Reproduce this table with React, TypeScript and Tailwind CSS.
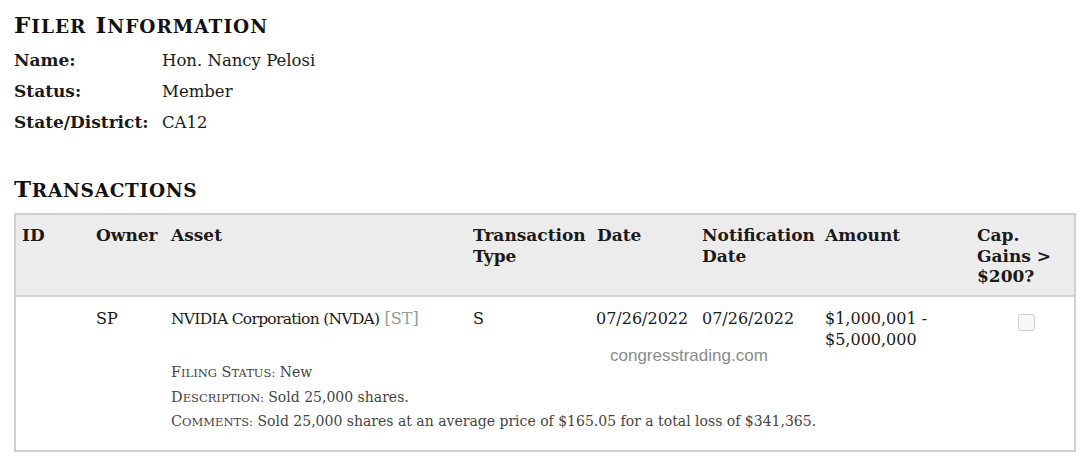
import React from "react";

const serif = { fontFamily: '"DejaVu Serif", "Liberation Serif", serif' };

function SC({ text, big, small, className = "" }: { text: string; big: string; small: string; className?: string }) {
  const words = text.split(" ");
  return (
    <span className={className}>
      {words.map((w, i) => (
        <React.Fragment key={i}>
          {i > 0 ? " " : ""}
          <span className={`${big} leading-none`}>{w[0]}</span>
          <span className={`${small} leading-none uppercase`}>{w.slice(1)}</span>
        </React.Fragment>
      ))}
    </span>
  );
}

export default function App() {
  const cols = "grid grid-cols-[74px_75px_302px_124px_105px_123px_152px_105px]";
  return (
    <div className="w-[1089px] h-[469px] bg-white text-[#1a1a1a] relative overflow-hidden" style={serif}>
      <div className="pl-[14px] pt-[11px]">
        <h2 className="font-bold tracking-[1px] text-[23px] leading-[28px] h-[28px] text-[#111]">
          <SC text="Filer Information" big="text-[23px]" small="text-[18.5px]" />
        </h2>
        <div className="mt-[6px] text-[17px] leading-[31px]">
          <div className="flex">
            <span className="w-[148px] font-bold">Name:</span>
            <span className="text-[16.5px]">Hon. Nancy Pelosi</span>
          </div>
          <div className="flex">
            <span className="w-[148px] font-bold">Status:</span>
            <span className="text-[16.5px]">Member</span>
          </div>
          <div className="flex">
            <span className="w-[148px] font-bold">State/District:</span>
            <span className="text-[16.5px]">CA12</span>
          </div>
        </div>
        <h2 className="mt-[37px] font-bold tracking-[0.7px] text-[23px] leading-[28px] h-[28px] text-[#111]">
          <SC text="Transactions" big="text-[23px]" small="text-[18.5px]" />
        </h2>
      </div>

      <div className="ml-[14px] mt-[10px] w-[1062px] border-2 border-[#d0d0d0] relative">
        <div className={`${cols} bg-[#ececec] border-b-2 border-[#d4d4d4] h-[82px] text-[17px] font-bold leading-[20.5px] pt-[10px]`}>
          <div className="pl-[6px]">ID</div>
          <div className="pl-[6px]">Owner</div>
          <div className="pl-[6px]">Asset</div>
          <div className="pl-[6px]">Transaction<br />Type</div>
          <div className="pl-[6px]">Date</div>
          <div className="pl-[6px]">Notification<br />Date</div>
          <div className="pl-[6px]">Amount</div>
          <div className="pl-[6px]">Cap.<br />Gains &gt;<br />$200?</div>
        </div>
        <div className={`${cols} text-[16px] leading-[21px] pt-[11px] pb-[16px]`}>
          <div className="pl-[6px]"></div>
          <div className="pl-[6px]">SP</div>
          <div className="pl-[6px]">
            <span className="text-[15.5px] tracking-[-0.7px]">NVIDIA Corporation (NVDA)</span>{" "}
            <span className="text-[#999]">[ST]</span>
          </div>
          <div className="pl-[6px]">S</div>
          <div className="pl-[5px]">07/26/2022</div>
          <div className="pl-[6px]">07/26/2022</div>
          <div className="pl-[6px]">$1,000,001 -<br />$5,000,000</div>
          <div className="flex justify-center pt-[6px] pl-[6px]">
            <div className="w-[17px] h-[17px] rounded-[3px] border border-[#cfcfcf] bg-[#f7f7f7]" />
          </div>
          <div className="col-start-3 col-span-6 pl-[6px] mt-[10px] text-[14px] leading-[24.5px] text-[#444]">
            <div>
              <SC text="Filing Status:" big="text-[14.5px]" small="text-[11.5px]" /> New
            </div>
            <div>
              <SC text="Description:" big="text-[14.5px]" small="text-[11.5px]" /> Sold 25,000 shares.
            </div>
            <div>
              <SC text="Comments:" big="text-[14.5px]" small="text-[11.5px]" /> Sold 25,000 shares at an average price of $165.05 for a total loss of $341,365.
            </div>
          </div>
        </div>
      </div>

      <div
        className="absolute left-[610px] top-[345px] text-[17px] text-[#8a8a8a] leading-[22px]"
        style={{ fontFamily: '"Liberation Sans", Arial, sans-serif' }}
      >
        congresstrading.com
      </div>
    </div>
  );
}
